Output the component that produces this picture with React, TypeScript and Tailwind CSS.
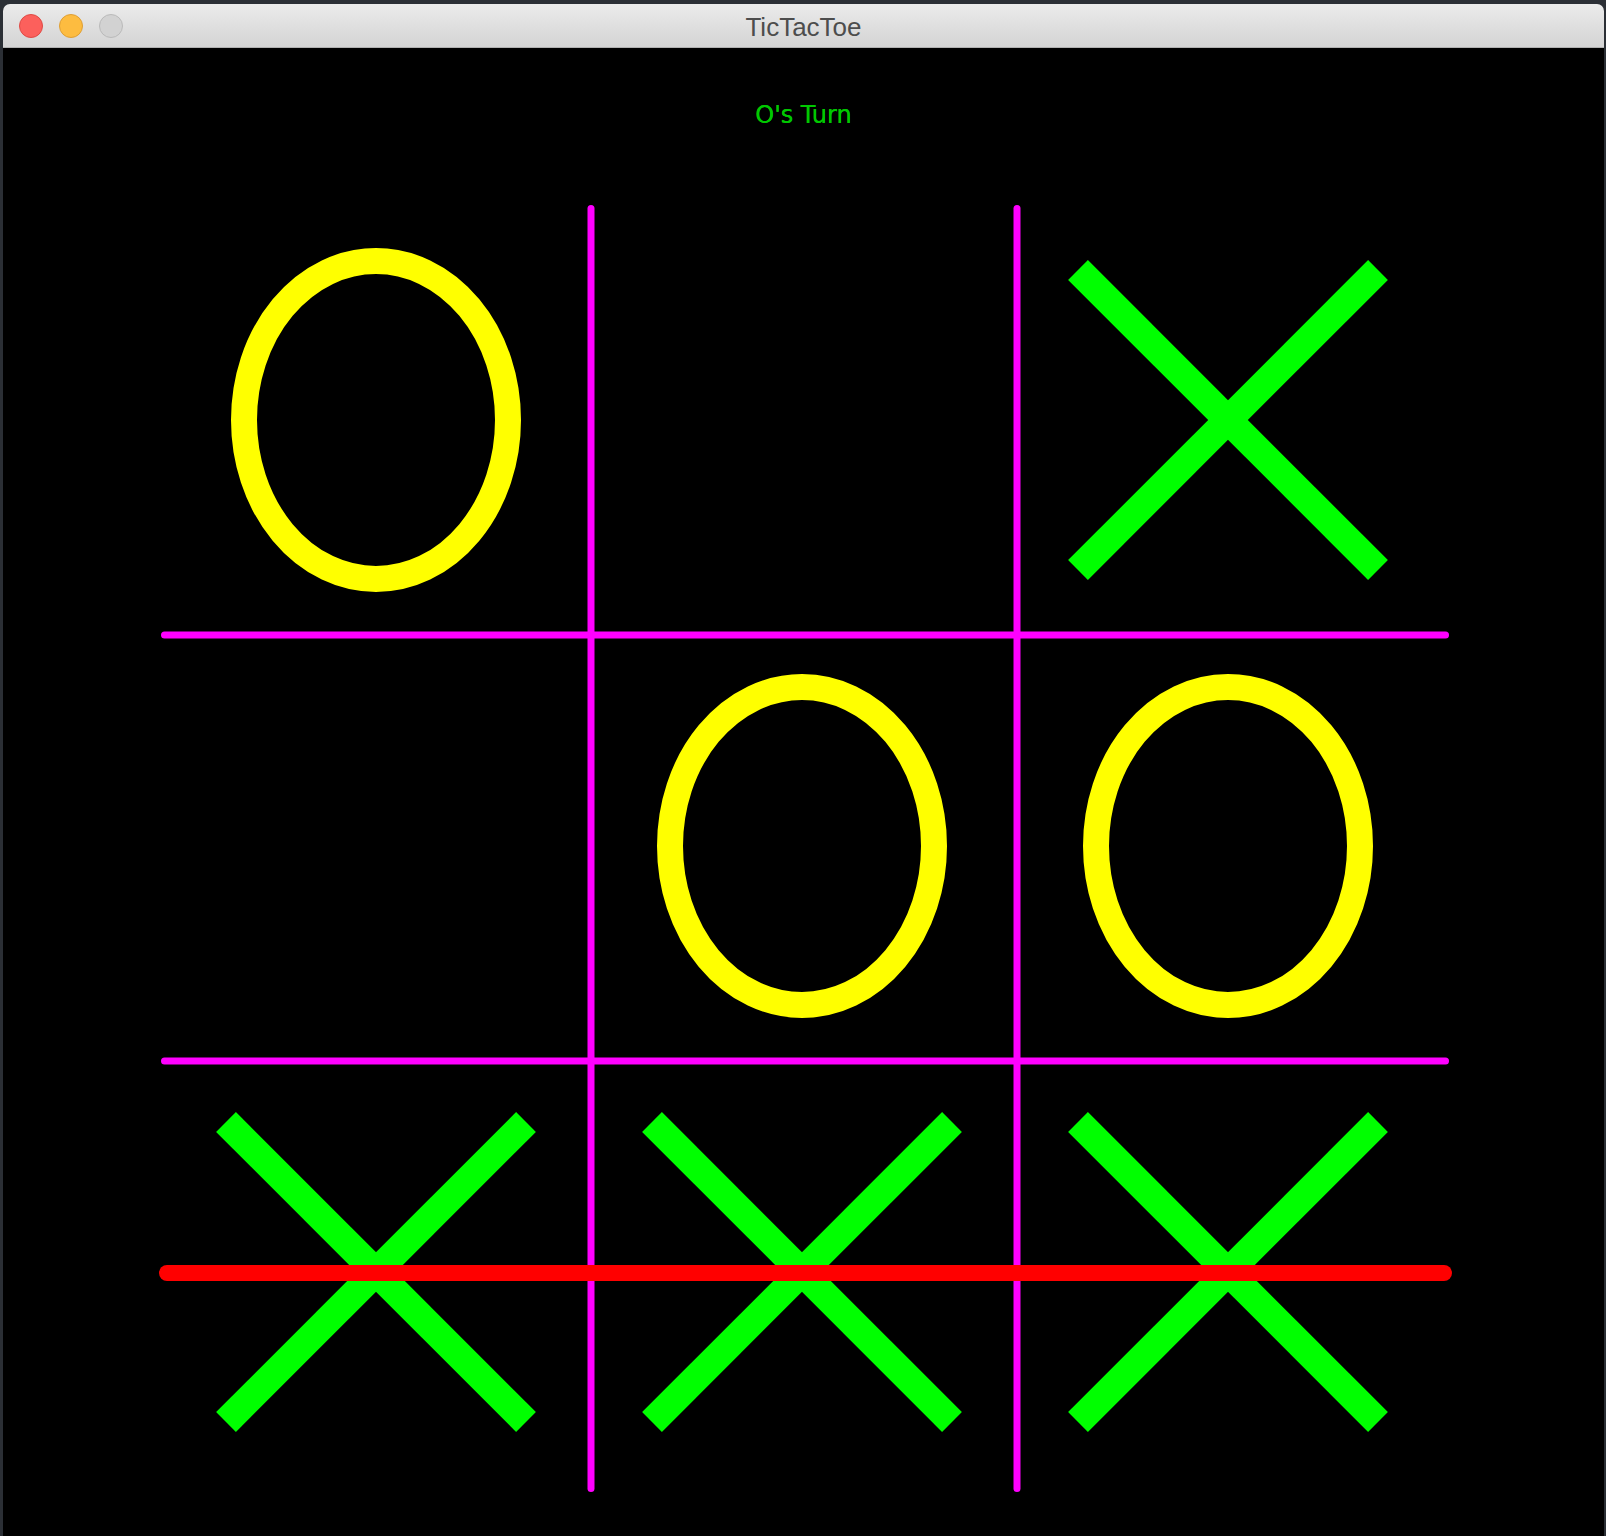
import React from 'react';

type Mark = 'X' | 'O' | null;

const board: Mark[][] = [
  ['O', null, 'X'],
  [null, 'O', 'O'],
  ['X', 'X', 'X'],
];

// cell centres on the page, in px
const cols = [376, 802, 1228];
const rows = [420, 846, 1272];

function XMark({ cx, cy }: { cx: number; cy: number }) {
  const h = 150;
  return (
    <g stroke="#00ff00" strokeWidth={28} strokeLinecap="butt">
      <line x1={cx - h} y1={cy - h} x2={cx + h} y2={cy + h} />
      <line x1={cx + h} y1={cy - h} x2={cx - h} y2={cy + h} />
    </g>
  );
}

function OMark({ cx, cy }: { cx: number; cy: number }) {
  return <ellipse cx={cx} cy={cy} rx={132} ry={159} fill="none" stroke="#ffff00" strokeWidth={26} />;
}

function TrafficLights() {
  return (
    <div className="flex items-center gap-[16px] pl-[16px] pt-[1px]">
      <span className="w-[24px] h-[24px] rounded-full bg-[#fc605c] border border-[#de4a45]" />
      <span className="w-[24px] h-[24px] rounded-full bg-[#fdbc40] border border-[#de9f34]" />
      <span className="w-[24px] h-[24px] rounded-full bg-[#d2d2d2] border border-[#bababa]" />
    </div>
  );
}

function Board() {
  return (
    <svg width={1601} height={1407} viewBox="3 129 1601 1407" className="block">
      {/* grid */}
      <g stroke="#ff00ff" strokeWidth={7} strokeLinecap="round">
        <line x1={591} y1={208.5} x2={591} y2={1488.5} />
        <line x1={1017} y1={208.5} x2={1017} y2={1488.5} />
        <line x1={164.5} y1={635} x2={1445.5} y2={635} />
        <line x1={164.5} y1={1061} x2={1445.5} y2={1061} />
      </g>
      {board.map((row, r) =>
        row.map((m, c) =>
          m === 'X' ? (
            <XMark key={`${r}-${c}`} cx={cols[c]} cy={rows[r]} />
          ) : m === 'O' ? (
            <OMark key={`${r}-${c}`} cx={cols[c]} cy={rows[r]} />
          ) : null
        )
      )}
      {/* winning line */}
      <line x1={167} y1={1273} x2={1444} y2={1273} stroke="#ff0000" strokeWidth={16} strokeLinecap="round" />
    </svg>
  );
}

export default function App() {
  return (
    <div className="w-[1606px] h-[1536px] bg-[#2b2f35] pt-[4px] pl-[3px] overflow-hidden">
      <div className="w-[1601px] h-[1532px] flex flex-col">
        {/* title bar */}
        <div className="relative h-[44px] shrink-0 rounded-t-[7px] bg-gradient-to-b from-[#ebebeb] to-[#d4d4d4] border-b border-[#b1b1b1] flex items-center">
          <TrafficLights />
          <div
            className="absolute inset-0 pt-[3px] flex items-center justify-center text-[26px] text-[#4d4d4d]"
            style={{ fontFamily: '"Liberation Sans", Arial, sans-serif' }}
          >
            TicTacToe
          </div>
        </div>
        {/* canvas */}
        <div className="flex-1 bg-black flex flex-col">
          <div
            className="pt-[53px] text-center text-[24px] leading-[28px] text-[#00c800] [text-shadow:0_0_0.6px_#00c800]"
            style={{ fontFamily: '"DejaVu Sans", sans-serif' }}
          >
            O's Turn
          </div>
          <Board />
        </div>
      </div>
    </div>
  );
}
